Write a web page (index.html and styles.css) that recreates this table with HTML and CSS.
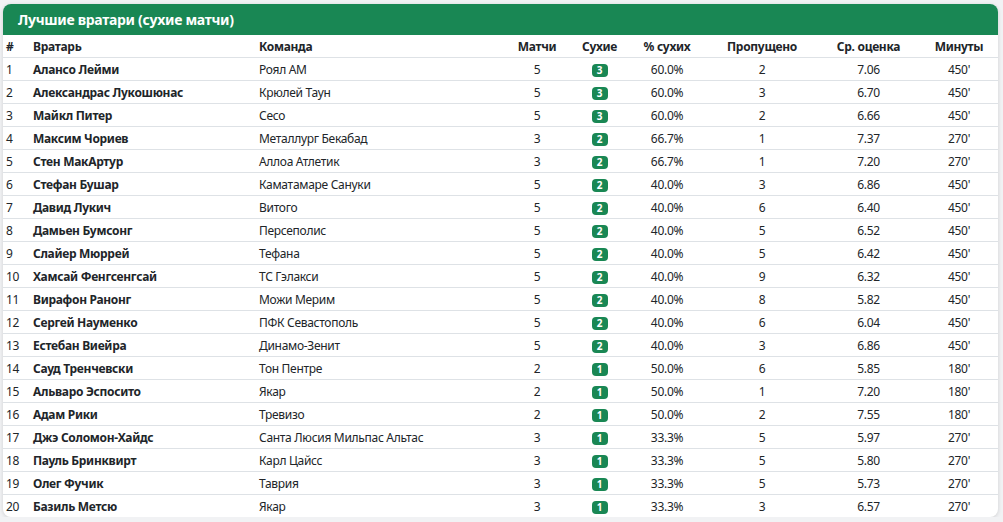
FILE: index.html
```html
<!DOCTYPE html>
<html lang="ru">
<head>
<meta charset="utf-8">
<title>Лучшие вратари</title>
<link rel="stylesheet" href="styles.css">
</head>
<body>
<div class="card">
  <div class="card-header">Лучшие вратари (сухие матчи)</div>
  <table class="stats">
    <colgroup>
      <col class="c-num"><col class="c-name"><col class="c-team"><col class="c-m"><col class="c-cs"><col class="c-pct"><col class="c-ga"><col class="c-rt"><col class="c-min">
    </colgroup>
    <thead>
      <tr><th>#</th><th>Вратарь</th><th>Команда</th><th class="ctr">Матчи</th><th class="ctr">Сухие</th><th class="ctr">% сухих</th><th class="ctr">Пропущено</th><th class="ctr">Ср. оценка</th><th class="ctr">Минуты</th></tr>
    </thead>
    <tbody>
      <tr><td>1</td><td class="name">Алансо Лейми</td><td>Роял АМ</td><td class="ctr">5</td><td class="ctr"><span class="badge">3</span></td><td class="ctr">60.0%</td><td class="ctr">2</td><td class="ctr">7.06</td><td class="ctr">450'</td></tr>
      <tr><td>2</td><td class="name">Александрас Лукошюнас</td><td>Крюлей Таун</td><td class="ctr">5</td><td class="ctr"><span class="badge">3</span></td><td class="ctr">60.0%</td><td class="ctr">3</td><td class="ctr">6.70</td><td class="ctr">450'</td></tr>
      <tr><td>3</td><td class="name">Майкл Питер</td><td>Сесо</td><td class="ctr">5</td><td class="ctr"><span class="badge">3</span></td><td class="ctr">60.0%</td><td class="ctr">2</td><td class="ctr">6.66</td><td class="ctr">450'</td></tr>
      <tr><td>4</td><td class="name">Максим Чориев</td><td>Металлург Бекабад</td><td class="ctr">3</td><td class="ctr"><span class="badge">2</span></td><td class="ctr">66.7%</td><td class="ctr">1</td><td class="ctr">7.37</td><td class="ctr">270'</td></tr>
      <tr><td>5</td><td class="name">Стен МакАртур</td><td>Аллоа Атлетик</td><td class="ctr">3</td><td class="ctr"><span class="badge">2</span></td><td class="ctr">66.7%</td><td class="ctr">1</td><td class="ctr">7.20</td><td class="ctr">270'</td></tr>
      <tr><td>6</td><td class="name">Стефан Бушар</td><td>Каматамаре Сануки</td><td class="ctr">5</td><td class="ctr"><span class="badge">2</span></td><td class="ctr">40.0%</td><td class="ctr">3</td><td class="ctr">6.86</td><td class="ctr">450'</td></tr>
      <tr><td>7</td><td class="name">Давид Лукич</td><td>Витого</td><td class="ctr">5</td><td class="ctr"><span class="badge">2</span></td><td class="ctr">40.0%</td><td class="ctr">6</td><td class="ctr">6.40</td><td class="ctr">450'</td></tr>
      <tr><td>8</td><td class="name">Дамьен Бумсонг</td><td>Персеполис</td><td class="ctr">5</td><td class="ctr"><span class="badge">2</span></td><td class="ctr">40.0%</td><td class="ctr">5</td><td class="ctr">6.52</td><td class="ctr">450'</td></tr>
      <tr><td>9</td><td class="name">Слайер Мюррей</td><td>Тефана</td><td class="ctr">5</td><td class="ctr"><span class="badge">2</span></td><td class="ctr">40.0%</td><td class="ctr">5</td><td class="ctr">6.42</td><td class="ctr">450'</td></tr>
      <tr><td>10</td><td class="name">Хамсай Фенгсенгсай</td><td>ТС Гэлакси</td><td class="ctr">5</td><td class="ctr"><span class="badge">2</span></td><td class="ctr">40.0%</td><td class="ctr">9</td><td class="ctr">6.32</td><td class="ctr">450'</td></tr>
      <tr><td>11</td><td class="name">Вирафон Ранонг</td><td>Можи Мерим</td><td class="ctr">5</td><td class="ctr"><span class="badge">2</span></td><td class="ctr">40.0%</td><td class="ctr">8</td><td class="ctr">5.82</td><td class="ctr">450'</td></tr>
      <tr><td>12</td><td class="name">Сергей Науменко</td><td>ПФК Севастополь</td><td class="ctr">5</td><td class="ctr"><span class="badge">2</span></td><td class="ctr">40.0%</td><td class="ctr">6</td><td class="ctr">6.04</td><td class="ctr">450'</td></tr>
      <tr><td>13</td><td class="name">Естебан Виейра</td><td>Динамо-Зенит</td><td class="ctr">5</td><td class="ctr"><span class="badge">2</span></td><td class="ctr">40.0%</td><td class="ctr">3</td><td class="ctr">6.86</td><td class="ctr">450'</td></tr>
      <tr><td>14</td><td class="name">Сауд Тренчевски</td><td>Тон Пентре</td><td class="ctr">2</td><td class="ctr"><span class="badge">1</span></td><td class="ctr">50.0%</td><td class="ctr">6</td><td class="ctr">5.85</td><td class="ctr">180'</td></tr>
      <tr><td>15</td><td class="name">Альваро Эспосито</td><td>Якар</td><td class="ctr">2</td><td class="ctr"><span class="badge">1</span></td><td class="ctr">50.0%</td><td class="ctr">1</td><td class="ctr">7.20</td><td class="ctr">180'</td></tr>
      <tr><td>16</td><td class="name">Адам Рики</td><td>Тревизо</td><td class="ctr">2</td><td class="ctr"><span class="badge">1</span></td><td class="ctr">50.0%</td><td class="ctr">2</td><td class="ctr">7.55</td><td class="ctr">180'</td></tr>
      <tr><td>17</td><td class="name">Джэ Соломон-Хайдс</td><td>Санта Люсия Мильпас Альтас</td><td class="ctr">3</td><td class="ctr"><span class="badge">1</span></td><td class="ctr">33.3%</td><td class="ctr">5</td><td class="ctr">5.97</td><td class="ctr">270'</td></tr>
      <tr><td>18</td><td class="name">Пауль Бринквирт</td><td>Карл Цайсс</td><td class="ctr">3</td><td class="ctr"><span class="badge">1</span></td><td class="ctr">33.3%</td><td class="ctr">5</td><td class="ctr">5.80</td><td class="ctr">270'</td></tr>
      <tr><td>19</td><td class="name">Олег Фучик</td><td>Таврия</td><td class="ctr">3</td><td class="ctr"><span class="badge">1</span></td><td class="ctr">33.3%</td><td class="ctr">5</td><td class="ctr">5.73</td><td class="ctr">270'</td></tr>
      <tr><td>20</td><td class="name">Базиль Метсю</td><td>Якар</td><td class="ctr">3</td><td class="ctr"><span class="badge">1</span></td><td class="ctr">33.3%</td><td class="ctr">3</td><td class="ctr">6.57</td><td class="ctr">270'</td></tr>
    </tbody>
  </table>
</div>
</body>
</html>
```

FILE: styles.css
```css
html, body {
  margin: 0;
  padding: 0;
  background: #f1f2f4;
}
body {
  padding: 4px 5px 0 3px;
  font-family: "Noto Sans", "Open Sans", sans-serif;
  color: #212529;
}
.card {
  background: #fff;
  border-radius: 8px;
  box-shadow: 0 1px 4px rgba(0, 0, 0, 0.14);
  overflow: hidden;
  width: 995px;
}
.card-header {
  background: #198754;
  color: #fff;
  font-weight: 700;
  font-size: 14px;
  letter-spacing: -0.3px;
  height: 31px;
  line-height: 31px;
  padding-left: 15px;
}
.stats {
  width: 100%;
  border-collapse: collapse;
  table-layout: fixed;
  font-size: 12px;
  letter-spacing: -0.3px;
}
.c-num { width: 27px; }
.c-name { width: 226px; }
.c-team { width: 246px; }
.c-m { width: 70px; }
.c-cs { width: 55px; }
.c-pct { width: 80px; }
.c-ga { width: 110px; }
.c-rt { width: 103px; }
.c-min { width: 78px; }
.stats th, .stats td {
  height: 22px;
  padding: 0 0 0 3px;
  text-align: left;
  white-space: nowrap;
  border-bottom: 1px solid #dee2e6;
}
.stats tbody tr:last-child td {
  border-bottom: none;
}
.stats th {
  font-weight: 700;
}
.stats .ctr {
  text-align: center;
  padding: 0;
}
.stats .name {
  font-weight: 700;
}
.badge {
  display: inline-block;
  background: #198754;
  color: #fff;
  font-size: 10px;
  font-weight: 700;
  letter-spacing: 0;
  line-height: 13px;
  height: 13px;
  min-width: 16px;
  padding: 0 2px;
  box-sizing: border-box;
  border-radius: 4px;
  vertical-align: middle;
}
```
